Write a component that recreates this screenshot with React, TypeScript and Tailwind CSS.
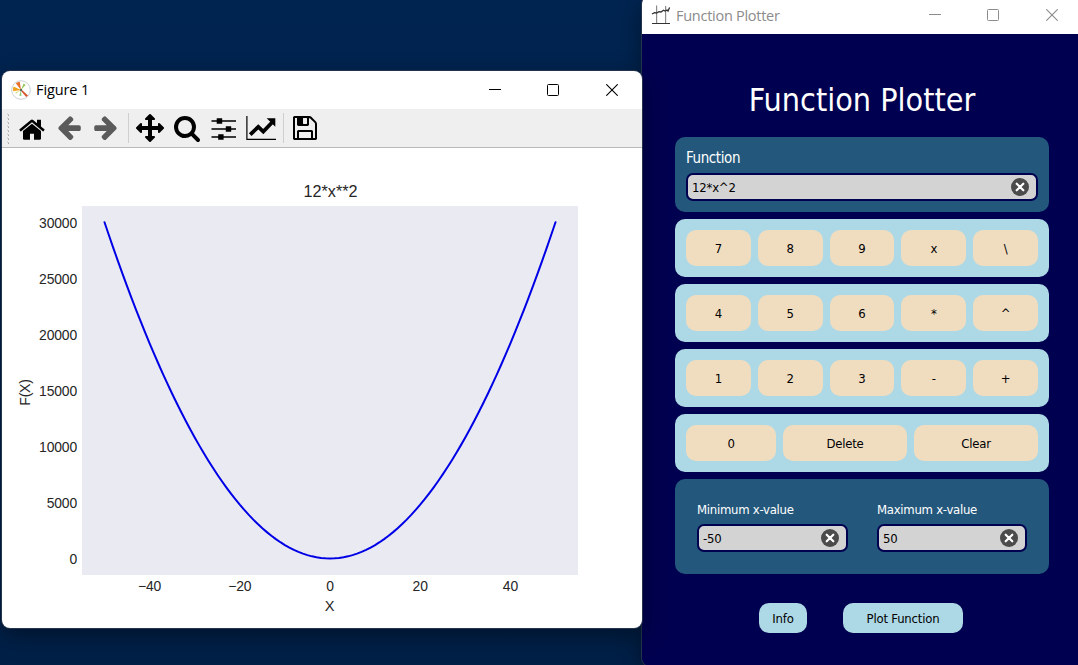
import type { ReactNode } from "react";

const HOME =
  "M1408 992v480q0 26-19 45t-45 19h-384v-384h-256v384h-384q-26 0-45-19t-19-45v-480q0-1 .5-3t.5-3l575-474 575 474q1 2 1 6zm223-69l-62 74q-8 9-21 11h-3q-13 0-21-7l-692-577-692 577q-12 8-24 7-13-2-21-11l-62-74q-8-10-7-23.5t11-21.5l719-599q32-26 76-26t76 26l244 204v-195q0-14 9-23t23-9h192q14 0 23 9t9 23v408l219 182q10 8 11 21.5t-7 23.5z";
const ARROW =
  "M1664 896v128q0 53-32.5 90.5t-84.5 37.5h-704l293 294q38 36 38 90t-38 90l-75 76q-37 37-90 37-52 0-91-37l-651-652q-37-37-37-90 0-52 37-91l651-650q38-38 91-38 52 0 90 38l75 74q38 38 38 91t-38 91l-293 293h704q52 0 84.5 37.5t32.5 90.5z";
const MOVE =
  "M1792 896q0 26-19 45l-256 256q-19 19-45 19t-45-19-19-45v-128h-384v384h128q26 0 45 19t19 45-19 45l-256 256q-19 19-45 19t-45-19l-256-256q-19-19-19-45t19-45 45-19h128v-384h-384v128q0 26-19 45t-45 19-45-19l-256-256q-19-19-19-45t19-45l256-256q19-19 45-19t45 19 19 45v128h384v-384h-128q-26 0-45-19t-19-45 19-45l256-256q19-19 45-19t45 19l256 256q19 19 19 45t-19 45-45 19h-128v384h384v-128q0-26 19-45t45-19 45 19l256 256q19 19 19 45z";
const SEARCH =
  "M1216 832q0-185-131.5-316.5t-316.5-131.5-316.5 131.5-131.5 316.5 131.5 316.5 316.5 131.5 316.5-131.5 131.5-316.5zm512 832q0 52-38 90t-90 38q-54 0-90-38l-343-342q-179 124-399 124-143 0-273.5-55.5t-225-150-150-225-55.5-273.5 55.5-273.5 150-225 225-150 273.5-55.5 273.5 55.5 225 150 150 225 55.5 273.5q0 220-124 399l343 343q37 37 37 90z";
const SAVE =
  "M512 1536h768v-384h-768v384zm896 0h128v-896q0-14-10-38.5t-20-34.5l-281-281q-10-10-34-20t-39-10v416q0 40-28 68t-68 28h-576q-40 0-68-28t-28-68v-416h-128v1280h128v-416q0-40 28-68t68-28h832q40 0 68 28t28 68v416zm-384-928v-320q0-13-9.5-22.5t-22.5-9.5h-192q-13 0-22.5 9.5t-9.5 22.5v320q0 13 9.5 22.5t22.5 9.5h192q13 0 22.5-9.5t9.5-22.5zm640 32v928q0 40-28 68t-68 28h-1344q-40 0-68-28t-28-68v-1344q0-40 28-68t68-28h928q40 0 88 20t76 48l280 280q28 28 48 76t20 88z";

function Tool({ children }: { children: ReactNode }) {
  return <button className="flex h-9 w-[37px] shrink-0 items-center justify-center">{children}</button>;
}

function Glyph({ d, viewBox = "0 0 1792 1792", className = "" }: { d: string; viewBox?: string; className?: string }) {
  return (
    <svg viewBox={viewBox} className={"size-[28px] shrink-0 " + className} fill="currentColor">
      <path d={d} />
    </svg>
  );
}

function Separator() {
  return <div className="mx-[3px] h-[30px] w-px shrink-0 bg-[#cfcfcf]" />;
}

function Controls() {
  return (
    <div className="flex items-center">
      <svg width="12" height="12" stroke="currentColor" fill="none">
        <path d="M0 5.5H12" />
      </svg>
      <svg width="12" height="12" stroke="currentColor" fill="none" className="ml-[46px]">
        <rect x="0.5" y="0.5" width="11" height="11" rx="1" />
      </svg>
      <svg width="12" height="12" stroke="currentColor" fill="none" className="ml-[47px]" strokeWidth="1.1">
        <path d="M0.3 0.3L11.7 11.7M11.7 0.3L0.3 11.7" />
      </svg>
    </div>
  );
}

function MatplotlibLogo() {
  return (
    <svg width="20" height="20" viewBox="0 0 20 20">
      <circle cx="10" cy="10" r="9.3" fill="#fff" stroke="#c4c9cd" strokeWidth="0.9" />
      <path d="M10 10L2.2 11.2A7.8 7.8 0 0 1 2.6 6.6Z" fill="#f0a21d" />
      <path d="M10 10L4.8 3.2A8.5 8.5 0 0 1 8.8 1.8Z" fill="#e8702a" />
      <path d="M10 10L12.6 3.6L14.6 5Z" fill="#93c95c" />
      <path d="M9.6 10.4L15.2 17L17 15.6L10.4 9.6Z" fill="#d9542c" />
      <path d="M10 10L8.2 15.8L10.4 16Z" fill="#8fca7c" />
      <path d="M10 10L4.2 12.4L5 13.8Z" fill="#d9dc8c" />
      <circle cx="10" cy="10" r="1.2" fill="#5d6f4f" />
    </svg>
  );
}

function PlotterLogo() {
  return (
    <svg width="20" height="20" viewBox="0 0 20 20" fill="none">
      <path d="M5.6 0.5V18M14.6 1V18" stroke="#8a8a8a" strokeWidth="1.2" />
      <path d="M1 18.5H19" stroke="#333" strokeWidth="1.2" />
      <path d="M1 9L3.5 7.6L5.5 8L8 6.6L10 7L12.5 5.2L14 6L16 5L17 6L18.6 2.4" stroke="#333" strokeWidth="1.3" />
    </svg>
  );
}

const YTICKS = [30000, 25000, 20000, 15000, 10000, 5000, 0];
const XTICKS = [-40, -20, 0, 20, 40];
const px = (x: number) => 328 + x * 4.51;
const py = (y: number) => 410.5 - (y * 336.3) / 30000;

function Chart() {
  const curve = Array.from({ length: 101 }, (_, i) => i - 50)
    .map((x) => `${px(x).toFixed(2)},${py(12 * x * x).toFixed(2)}`)
    .join(" ");
  return (
    <svg
      width="640"
      height="480"
      className="block font-['Liberation_Sans',Arial,sans-serif]"
      fill="#262626"
      fontSize="13.9"
    >
      <rect x="80" y="58" width="496" height="369" fill="#eaeaf2" />
      <polyline points={curve} fill="none" stroke="#0000e6" strokeWidth="2" strokeLinecap="round" strokeLinejoin="round" />
      <text x="328.5" y="49" textAnchor="middle" fontSize="16.2">
        12*x**2
      </text>
      {YTICKS.map((v) => (
        <text key={v} x="75" y={py(v) + 5.6} textAnchor="end" letterSpacing="-0.15">
          {v}
        </text>
      ))}
      {XTICKS.map((v) => (
        <text key={v} x={px(v)} y="443" textAnchor="middle" letterSpacing="-0.15">
          {v < 0 ? `−${-v}` : v}
        </text>
      ))}
      <text x="327.5" y="463" textAnchor="middle" fontSize="14.6">
        X
      </text>
      <text transform="translate(28 244.5) rotate(-90)" textAnchor="middle" fontSize="14.2" letterSpacing="-0.3">
        F(X)
      </text>
    </svg>
  );
}

function FigureWindow() {
  return (
    <section className="absolute top-[71px] left-[2px] flex h-[557px] w-[640px] flex-col overflow-hidden rounded-lg bg-white shadow-[0_0_0_1px_#24344c,0_8px_24px_rgba(0,0,0,0.4)]">
      <header className="flex h-[38px] shrink-0 items-center justify-between pr-6 pl-[9px] text-black">
        <div className="flex items-center gap-[5px]">
          <MatplotlibLogo />
          <span className="text-[14.5px] tracking-[-0.1px]">Figure 1</span>
        </div>
        <Controls />
      </header>
      <div className="flex h-[39px] shrink-0 items-center border-b border-[#b8b8b8] bg-[#efefef] pl-1 text-black">
        <svg width="7.5" height="32" className="shrink-0">
          <path d="M1.5 1.5V31" stroke="#c4c4c4" strokeWidth="1" strokeDasharray="1 3" />
          <path d="M2.5 2.5V32" stroke="#a4a4a4" strokeWidth="1" strokeDasharray="1.5 2.5" />
        </svg>
        <Tool>
          <Glyph d={HOME} viewBox="-62 -40 1792 1792" className="translate-y-px" />
        </Tool>
        <Tool>
          <Glyph d={ARROW} viewBox="-30 30 1840 1840" className="text-[#5b5b5b]" />
        </Tool>
        <Tool>
          <Glyph d={ARROW} viewBox="-30 30 1840 1840" className="-scale-x-100 text-[#5b5b5b]" />
        </Tool>
        <Separator />
        <Tool>
          <Glyph d={MOVE} />
        </Tool>
        <Tool>
          <Glyph d={SEARCH} />
        </Tool>
        <Tool>
          <svg width="26" height="24" className="shrink-0 translate-y-px" stroke="#000" strokeWidth="1.7">
            <path d="M0.5 4H25M0.5 12H25M0.5 20H25" />
            <path d="M5.7 4H11.2M14.8 12H20.2M7.2 20H12.6" strokeWidth="5.6" />
          </svg>
        </Tool>
        <Tool>
          <svg width="30" height="26" className="shrink-0">
            <path d="M0.9 1V24.3H30" fill="none" stroke="#000" strokeWidth="1.2" />
            <path d="M4.2 19.6L12.3 11.8L17.3 16.6L26 7.5" fill="none" stroke="#000" strokeWidth="3.8" />
            <path d="M20.7 3.2H29.3V11.8Z" />
          </svg>
        </Tool>
        <Separator />
        <Tool>
          <Glyph d={SAVE} />
        </Tool>
      </div>
      <Chart />
    </section>
  );
}

function Field({ value, className = "" }: { value: string; className?: string }) {
  return (
    <div
      className={
        "flex h-7 items-center justify-between rounded-[7px] border-2 border-[#000050] bg-[#d3d3d3] pr-[7px] pl-1 text-[13px] tracking-[-0.2px] text-black " +
        className
      }
    >
      <span className="pt-px">{value}</span>
      <svg width="18" height="18" className="shrink-0">
        <circle cx="9" cy="9" r="9" fill="#4b4b4b" />
        <path d="M5.7 5.7L12.3 12.3M12.3 5.7L5.7 12.3" stroke="#fff" strokeWidth="2.2" strokeLinecap="round" />
      </svg>
    </div>
  );
}

function Key({ label, className = "flex-1" }: { label: string; className?: string }) {
  return (
    <button
      className={
        "flex h-9 items-center justify-center rounded-[10px] bg-[#f0ddc0] pt-0.5 text-[13px] tracking-[-0.2px] text-black " +
        className
      }
    >
      {label}
    </button>
  );
}

const ROWS = [
  ["7", "8", "9", "x", "\\"],
  ["4", "5", "6", "*", "^"],
  ["1", "2", "3", "-", "+"],
];

function PlotterWindow() {
  return (
    <section className="absolute -top-1 left-[642px] flex h-[670px] w-[436px] flex-col overflow-hidden rounded-l-lg bg-[#000050] shadow-[0_0_0_1px_#24344c,0_8px_24px_rgba(0,0,0,0.4)]">
      <header className="flex h-[38px] shrink-0 items-center justify-between bg-white pr-5 pl-[9px] text-[#8b8b8b]">
        <div className="flex items-center gap-[5px]">
          <PlotterLogo />
          <span className="pt-px text-[14.5px] tracking-[-0.27px]">Function Plotter</span>
        </div>
        <Controls />
      </header>
      <main className="ml-[33px] flex w-[374px] flex-col font-['DejaVu_Sans_Condensed','DejaVu_Sans',sans-serif] text-white">
        <h1 className="flex h-[103px] items-center justify-center pt-[29px] text-[32px]">Function Plotter</h1>
        <div className="flex flex-col gap-[7px]">
          <div className="h-[75px] rounded-[10px] bg-[#23587c] px-[11px] pt-[11px]">
            <label className="block h-[25px] text-[15px] leading-[21px] tracking-[-0.4px]">Function</label>
            <Field value="12*x^2" />
          </div>
          {ROWS.map((row) => (
            <div key={row[0]} className="flex gap-[7px] rounded-[10px] bg-[#add8e6] p-[11px]">
              {row.map((k) => (
                <Key key={k} label={k} />
              ))}
            </div>
          ))}
          <div className="flex gap-[7px] rounded-[10px] bg-[#add8e6] p-[11px]">
            <Key label="0" className="w-[90px]" />
            <Key label="Delete" />
            <Key label="Clear" />
          </div>
          <div className="flex h-[95px] gap-[29px] rounded-[10px] bg-[#23587c] px-[22px] pt-[21px] tracking-[-0.27px]">
            <div className="w-[151px]">
              <label className="block h-6 text-[13px] leading-[19px]">Minimum x-value</label>
              <Field value="-50" />
            </div>
            <div className="w-[150px]">
              <label className="block h-6 text-[13px] leading-[19px]">Maximum x-value</label>
              <Field value="50" />
            </div>
          </div>
        </div>
        <div className="mt-[29px] ml-[84px] flex gap-9 text-[13px] tracking-[-0.2px] text-black">
          <button className="h-[30px] w-12 rounded-[10px] bg-[#add8e6] pt-0.5">Info</button>
          <button className="h-[30px] w-[120px] rounded-[10px] bg-[#add8e6] pt-0.5">Plot Function</button>
        </div>
      </main>
    </section>
  );
}

export default function App() {
  return (
    <div className="relative h-[665px] w-[1078px] overflow-hidden bg-linear-to-b from-[#002450] to-[#002048] font-['Open_Sans','Noto_Sans',sans-serif]">
      <PlotterWindow />
      <FigureWindow />
    </div>
  );
}
